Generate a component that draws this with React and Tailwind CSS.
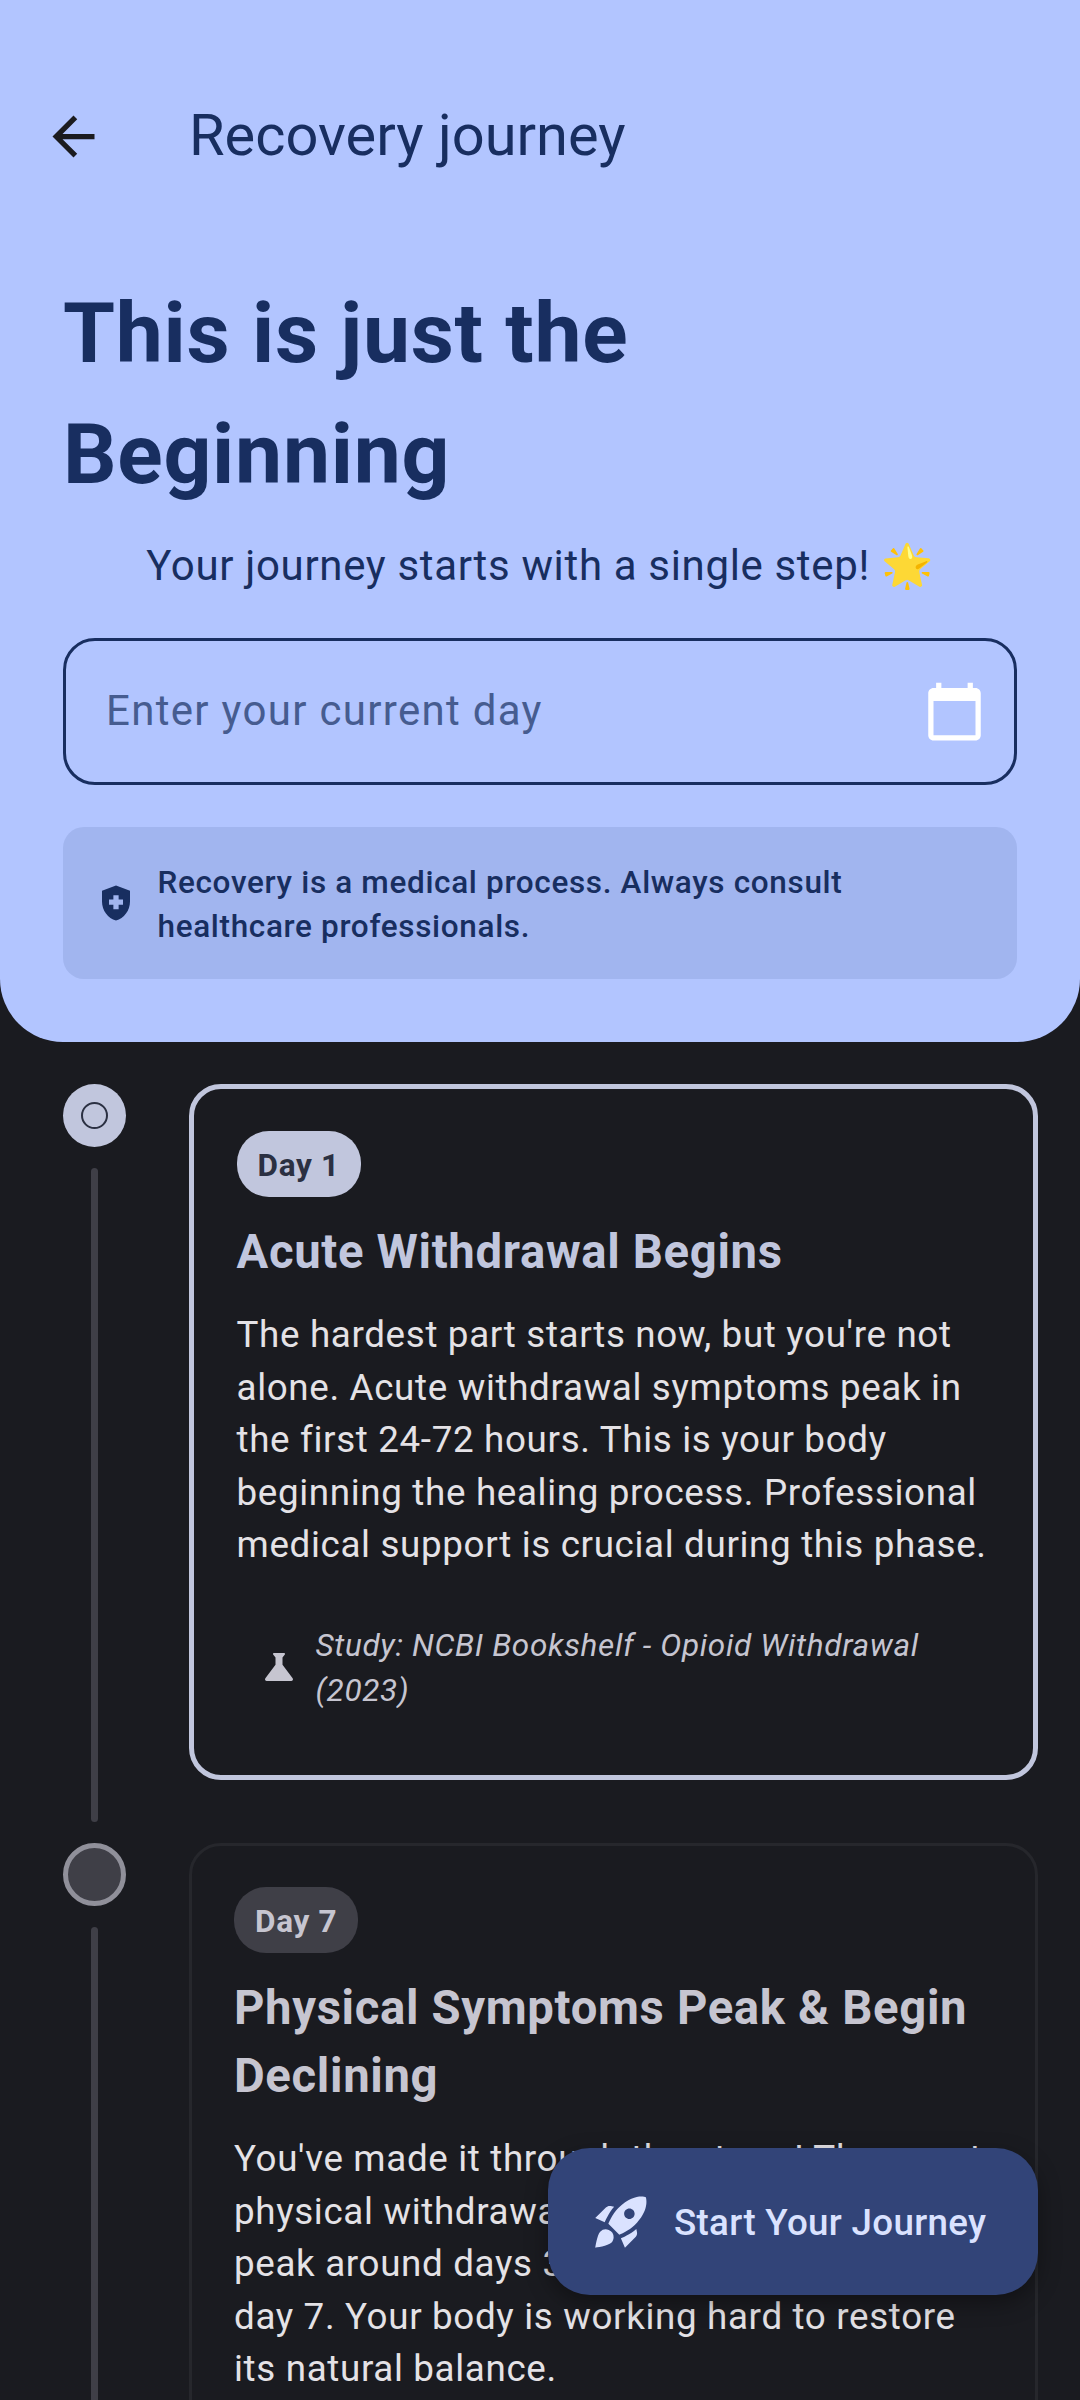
import {
  MdArrowBack,
  MdCalendarToday,
  MdHealthAndSafety,
  MdRocketLaunch,
  MdScience,
} from "react-icons/md";

const milestones = [
  {
    day: "Day 1",
    active: true,
    title: ["Acute Withdrawal Begins"],
    body: [
      "The hardest part starts now, but you're not",
      "alone. Acute withdrawal symptoms peak in",
      "the first 24-72 hours. This is your body",
      "beginning the healing process. Professional",
      "medical support is crucial during this phase.",
    ],
    study: ["Study: NCBI Bookshelf - Opioid Withdrawal", "(2023)"],
  },
  {
    day: "Day 7",
    active: false,
    title: ["Physical Symptoms Peak & Begin", "Declining"],
    body: [
      "You've made it through the storm! The worst",
      "physical withdrawal symptoms typically",
      "peak around days 3-5 and improve by",
      "day 7. Your body is working hard to restore",
      "its natural balance.",
    ],
  },
];

function Lines({ lines }) {
  return lines.map((line) => (
    <span key={line} className="block whitespace-nowrap">
      {line}
    </span>
  ));
}

function Milestone({ item }) {
  return (
    <li className="flex">
      <div className="mr-[63px] flex w-[63px] shrink-0 flex-col items-center">
        {item.active ? (
          <div className="flex size-[63px] shrink-0 items-center justify-center rounded-full bg-[#c1c6dd]">
            <div className="size-[27px] rounded-full border-2 border-[#2b3042]" />
          </div>
        ) : (
          <div className="size-[63px] shrink-0 rounded-full border-[5px] border-[#90909a] bg-[#3f3f47]" />
        )}
        <div className="mt-[21px] mb-[21px] w-[7px] grow rounded-full bg-[#3f3f47]" />
      </div>
      <article
        className={
          item.active
            ? "mb-[63px] w-[849px] rounded-[32px] border-[5px] border-[#c1c6dd] py-[42px] pr-[42px] pl-[42.5px]"
            : "mb-[63px] w-[849px] rounded-[32px] border-[3px] border-[#26272c] px-[42px] py-[41px]"
        }
      >
        <div
          className={
            item.active
              ? "flex h-[66px] w-fit items-center rounded-[32px] bg-[#c1c6dd] px-[21px] pt-[3px] text-[31.5px] leading-[44px] font-bold text-[#2b3042]"
              : "flex h-[66px] w-fit items-center rounded-[32px] bg-[#3f3f47] px-[21px] pt-[3px] text-[31.5px] leading-[44px] font-bold text-[#c6c5d0]"
          }
        >
          {item.day}
        </div>
        <h2
          className={
            item.active
              ? "mt-[21px] text-[47.25px] leading-[68px] font-bold text-[#c1c6dd]"
              : "mt-[21px] text-[47.25px] leading-[68px] font-bold text-[#c6c5d0]"
          }
        >
          <Lines lines={item.title} />
        </h2>
        <p className="mt-[23px] text-[36.75px] leading-[52.5px] text-[#e4e2e6]">
          <Lines lines={item.body} />
        </p>
        {item.study && (
          <div className="mt-[29.5px] flex items-center gap-[16px] p-[21px] text-[#c6c5d0]">
            <MdScience className="size-[42px]" />
            <p className="pt-[2px] -mb-[1px] text-[31.5px] leading-[44.5px] italic">
              <Lines lines={item.study} />
            </p>
          </div>
        )}
      </article>
    </li>
  );
}

export default function App() {
  return (
    <div className="relative h-[2400px] w-[1080px] overflow-hidden bg-[#1a1b20] font-['Roboto',sans-serif] tracking-[0.66px]">
      <header className="flex h-[1042px] flex-col rounded-b-[63px] bg-[#b2c5ff] px-[63px] text-[#182e60]">
        <div className="mt-[94px] -ml-[21px] flex h-[84px] items-center">
          <MdArrowBack className="mr-[84px] size-[63px] text-[#1b1b1f]" />
          <span className="mb-[2px] text-[57.75px] leading-[74px] tracking-normal">
            Recovery journey
          </span>
        </div>
        <h1 className="mt-[95px] text-[84px] leading-[121px] font-bold tracking-[0.72px]">
          <Lines lines={["This is just the", "Beginning"]} />
        </h1>
        <p className="mt-[19px] h-[63px] text-center text-[42px] leading-[63px] whitespace-nowrap">
          Your journey starts with a single step! 🌟
        </p>
        <div className="mt-[41px] flex h-[147px] shrink-0 items-center justify-between rounded-[32px] border-[3px] border-[#182e60] pr-[28px] pl-[40px]">
          <span className="mb-[2px] text-[42px] leading-[60px] tracking-[1.31px] text-[#465c90]">
            Enter your current day
          </span>
          <MdCalendarToday className="size-[63px] text-white" />
        </div>
        <div className="mt-[42px] flex h-[152px] shrink-0 items-center gap-[21px] rounded-[21px] bg-[#a1b5ef] px-[31.5px]">
          <MdHealthAndSafety className="size-[42px]" />
          <p className="pt-[3px] text-[31.5px] leading-[44px] font-medium">
            <Lines
              lines={[
                "Recovery is a medical process. Always consult",
                "healthcare professionals.",
              ]}
            />
          </p>
        </div>
      </header>

      <ul className="mt-[42px] pl-[63px]">
        {milestones.map((item) => (
          <Milestone key={item.day} item={item} />
        ))}
      </ul>

      <button className="absolute right-[42px] bottom-[105px] flex h-[147px] w-[490px] items-center rounded-[42px] bg-[#324478] pl-[42px] text-[#dae2ff] shadow-[0_8px_22px_rgba(0,0,0,0.35)]">
        <MdRocketLaunch className="size-[63px]" />
        <span className="mt-[2px] ml-[21px] text-[36.75px] leading-[53px] font-medium tracking-[0.3px] whitespace-nowrap">
          Start Your Journey
        </span>
      </button>
    </div>
  );
}
